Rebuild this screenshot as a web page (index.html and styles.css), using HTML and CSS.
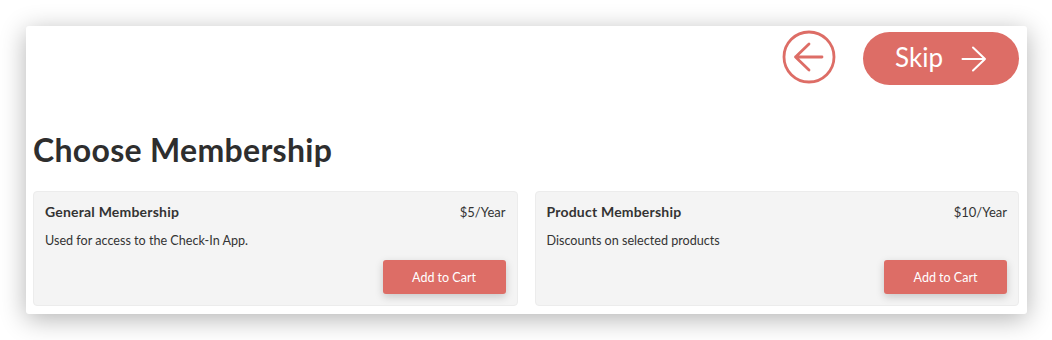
FILE: index.html
```html
<!DOCTYPE html>
<html>
<head>
<meta charset="utf-8">
<link rel="stylesheet" href="styles.css">
</head>
<body>
<div class="panel">
  <div class="topbar">
    <button class="back" aria-label="Back">
      <svg width="54" height="54" viewBox="0 0 54 54" fill="none" stroke="#dd6d66" stroke-width="2.8" stroke-linecap="round" stroke-linejoin="round">
        <circle cx="27" cy="27" r="25"/>
        <path d="M40 27H13.5M27 14L13.5 27 27 40"/>
      </svg>
    </button>
    <button class="skip">Skip
      <svg width="26" height="26" viewBox="0 0 26 26" fill="none" stroke="#fff" stroke-width="2" stroke-linecap="round" stroke-linejoin="round">
        <path d="M1.5 13h22.5M12 1.5L24 13 12 24.5"/>
      </svg>
    </button>
  </div>
  <h1 class="title">Choose Membership</h1>
  <div class="cards">
    <div class="card">
      <div class="card-head">
        <span class="card-name">General Membership</span>
        <span class="card-price">$5/Year</span>
      </div>
      <p class="card-desc">Used for access to the Check-In App.</p>
      <div class="card-foot"><button class="cart">Add to Cart</button></div>
    </div>
    <div class="card">
      <div class="card-head">
        <span class="card-name">Product Membership</span>
        <span class="card-price">$10/Year</span>
      </div>
      <p class="card-desc">Discounts on selected products</p>
      <div class="card-foot"><button class="cart">Add to Cart</button></div>
    </div>
  </div>
</div>
</body>
</html>
```
FILE: styles.css
```css
html, body {
  margin: 0;
  padding: 0;
  background: #fff;
}
body {
  font-family: "Lato", "Open Sans", sans-serif;
  color: #333;
  padding: 26px 25px 0 26px;
  min-height: 340px;
  box-sizing: border-box;
  overflow: hidden;
}
.panel {
  width: 1001px;
  height: 288px;
  box-sizing: border-box;
  background: #fff;
  border-radius: 3px;
  box-shadow: 0 5px 26px rgba(0,0,0,0.3);
  padding: 3px 8px 0 7px;
}
.topbar {
  display: flex;
  justify-content: flex-end;
  align-items: center;
  gap: 27px;
  height: 56px;
}
.back {
  width: 54px;
  height: 54px;
  padding: 0;
  border: 0;
  background: none;
  display: flex;
}
.skip {
  width: 156px;
  height: 53px;
  border: 0;
  border-radius: 27px;
  background: #dd6d66;
  color: #fff;
  font-family: "Lato", sans-serif;
  font-size: 26px;
  font-weight: 400;
  display: flex;
  align-items: center;
  justify-content: center;
  gap: 18px;
  padding: 0 0 2px 0;
  margin-top: 2px;
}
.skip svg { margin-top: 3px; }
.title {
  margin: 45px 0 0 0;
  font-size: 32px;
  font-weight: 700;
  line-height: 40px;
  color: #2e2e2e;
  letter-spacing: 0.3px;
}
.cards {
  display: grid;
  grid-template-columns: 1fr 1fr;
  gap: 17px;
  margin-top: 21px;
}
.card {
  background: #f4f4f4;
  border: 1px solid #ececec;
  border-radius: 4px;
  padding: 11px;
  height: 115px;
  box-sizing: border-box;
  display: flex;
  flex-direction: column;
}
.card-head {
  display: flex;
  justify-content: space-between;
  align-items: baseline;
  line-height: 18px;
}
.card-name {
  font-size: 14px;
  font-weight: 700;
  letter-spacing: 0.2px;
}
.card-price {
  font-size: 13px;
  font-weight: 400;
}
.card-desc {
  margin: 12px 0 0 0;
  font-size: 12.6px;
  line-height: 16px;
}
.card-foot {
  margin-top: auto;
  display: flex;
  justify-content: flex-end;
}
.cart {
  width: 123px;
  height: 34px;
  border: 0;
  border-radius: 3px;
  background: #dd6d66;
  color: #fff;
  font-family: "Lato", sans-serif;
  font-size: 12.5px;
  box-shadow: 0 3px 8px rgba(0,0,0,0.18);
}
```
